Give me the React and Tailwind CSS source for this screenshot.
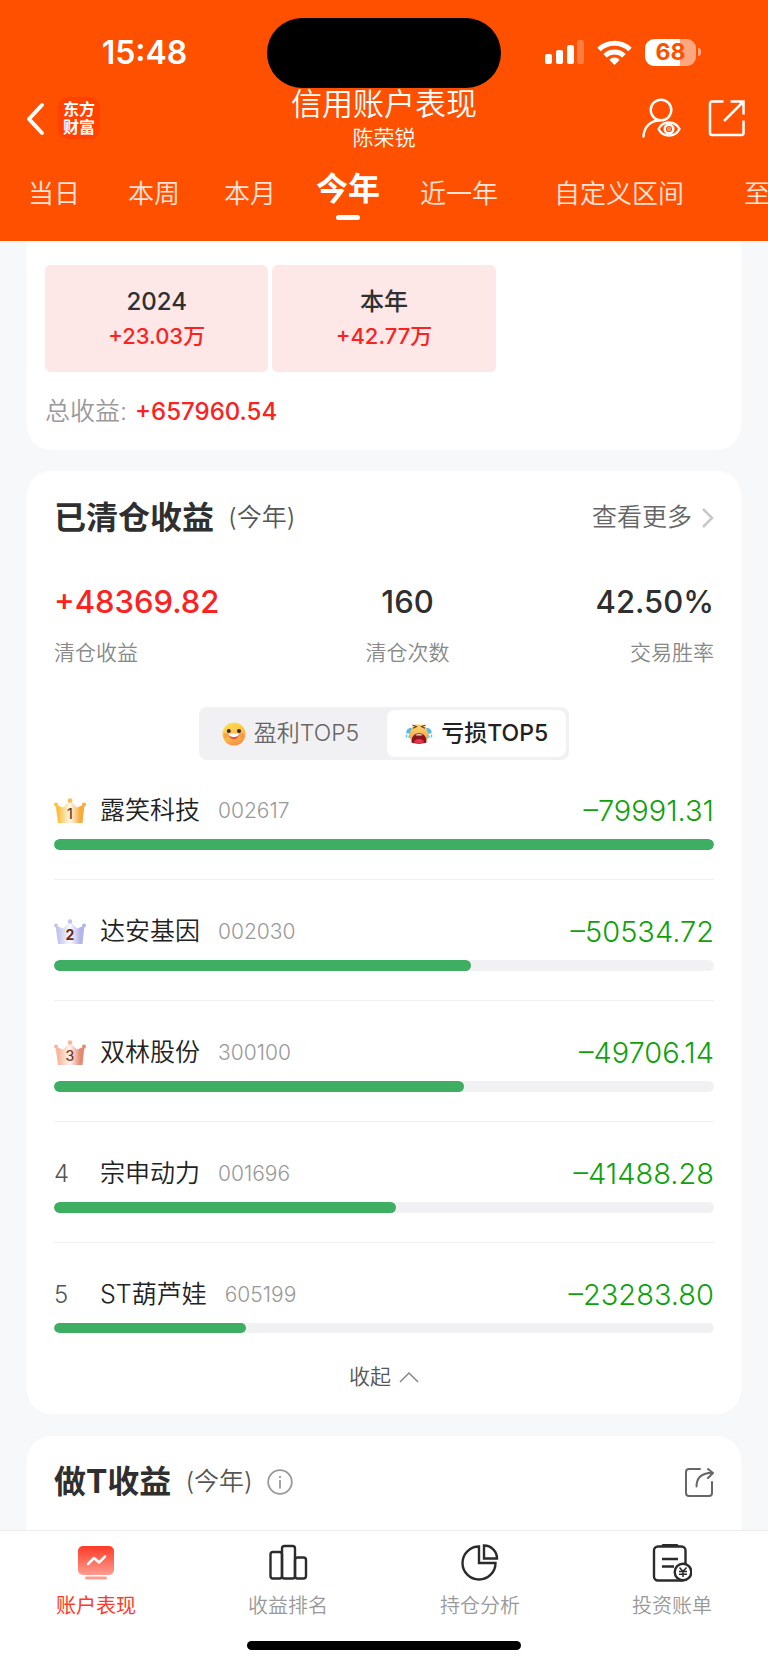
import { useState } from 'react'

const ranges = [
  { label: '当日', className: 'ml-7' },
  { label: '本周', className: 'ml-12' },
  { label: '本月', className: 'ml-11' },
  { label: '今年', className: 'ml-10' },
  { label: '近一年', className: 'ml-10' },
  { label: '自定义区间', className: 'ml-14' },
  { label: '至今', className: 'ml-15' },
]

const years = [
  { label: '2024', value: '+23.03万' },
  { label: '本年', value: '+42.77万' },
]

const stats = [
  { label: '清仓收益', value: '+48369.82', className: 'items-start text-[#fb2222]' },
  { label: '清仓次数', value: '160', className: 'items-center text-[#2f2f2f]' },
  { label: '交易胜率', value: '42.50%', className: 'items-end text-[#2f2f2f]' },
]

const losses = [
  { name: '露笑科技', code: '002617', amount: 79991.31 },
  { name: '达安基因', code: '002030', amount: 50534.72 },
  { name: '双林股份', code: '300100', amount: 49706.14 },
  { name: '宗申动力', code: '001696', amount: 41488.28 },
  { name: 'ST葫芦娃', code: '605199', amount: 23283.8 },
]

const crowns = [
  { edge: '#f6ab3a', mid: '#fff8ec', left: '#fbc043', text: '#6b3a1e' },
  { edge: '#b3b6e6', mid: '#fafaff', left: '#c3c5ea', text: '#6b2a1e' },
  { edge: '#e58a72', mid: '#fff4f0', left: '#f7b79c', text: '#7a3a2a' },
]

function StatusBar() {
  return (
    <div className="grid h-[88px] grid-cols-[1fr_234px_1fr] items-end">
      <div className="flex h-[70px] items-center justify-center pl-[22px]">
        <span className="text-[32px] font-semibold leading-none">15:48</span>
      </div>
      <div className="h-[70px] rounded-full bg-black" />
      <div className="flex h-[70px] items-center pb-0.5 pl-11">
        <svg className="h-6 w-[40px]" viewBox="0 0 40 24" fill="#fff">
          <rect x="0" y="14" width="7" height="10" rx="2" />
          <rect x="11" y="10" width="7" height="14" rx="2" />
          <rect x="22" y="5" width="7" height="19" rx="2" />
          <rect x="32" y="0" width="7" height="24" rx="2" opacity="0.25" />
        </svg>
        <svg className="ml-3 h-[25px] w-[35px]" viewBox="0 0 35 25" fill="none" stroke="#fff" strokeWidth="5">
          <path d="M2 9.5a22.5 22.5 0 0 1 31 0" />
          <path d="M8 15.8a13.8 13.8 0 0 1 19 0" />
          <path d="M17.5 25l-5.2-5.3a7.4 7.4 0 0 1 10.400 0z" fill="#fff" stroke="none" />
        </svg>
        <div className="ml-[13px] flex h-[27px] w-[51px] items-center justify-center rounded-[9px] bg-linear-to-r from-white from-68% to-white/50 to-68% text-[23px] font-bold leading-none text-[#ff5000]">
          68
        </div>
        <div className="ml-0.5 h-2 w-[3px] rounded-r-full bg-white/50" />
      </div>
    </div>
  )
}

function TitleBar() {
  return (
    <div className="grid h-16 grid-cols-[1fr_auto_1fr] items-center">
      <div className="flex items-center gap-3 pb-2 pl-6">
        <button aria-label="返回">
          <svg className="h-9 w-[22px]" viewBox="0 0 22 36" fill="none" stroke="#fff" strokeWidth="4" strokeLinecap="round" strokeLinejoin="round">
            <path d="M18 5L5 19L18 33" />
          </svg>
        </button>
        <div className="flex h-[42px] w-[42px] flex-col items-center justify-center rounded-[10px] bg-[#ff4200] text-[16px] font-bold leading-[18px]">
          <span>东方</span>
          <span>财富</span>
        </div>
      </div>
      <div className="flex flex-col items-center">
        <h1 className="text-[31px] font-[350] leading-8">信用账户表现</h1>
        <p className="text-[21px] font-[350] leading-9">陈荣锐</p>
      </div>
      <div className="flex items-center justify-end gap-[27px] pb-2 pr-[22px]">
        <button aria-label="账户查看">
          <svg className="h-10 w-[39px]" viewBox="0 0 39 40" fill="none" stroke="#fff" strokeWidth="2.4" strokeLinecap="round">
            <circle cx="19" cy="12" r="10.3" />
            <path d="M1.500 38.500C2 29 8.500 22.500 17.500 22.500" />
            <path d="M16.500 31C21 22.300 33 22.300 37.500 31C33 39.700 21 39.700 16.500 31z" />
            <circle cx="27" cy="31" r="4.300" />
            <circle cx="27" cy="31" r="1" opacity="0.4" />
          </svg>
        </button>
        <button aria-label="分享">
          <svg className="h-[38px] w-[38px]" viewBox="0 0 38 38" fill="none" stroke="#fff" strokeWidth="2.500">
            <path d="M15.500 2.500H4a2 2 0 0 0-2 2V34a2 2 0 0 0 2 2H33.500a2 2 0 0 0 2-2V21.500" />
            <path d="M22.500 2.500H35.500V15.500M35 3L16 22" />
          </svg>
        </button>
      </div>
    </div>
  )
}

function Ranges({ active, onChange }) {
  return (
    <nav className="flex h-[89px] items-center overflow-hidden whitespace-nowrap pb-1.5">
      {ranges.map((item) => (
        <button
          key={item.label}
          onClick={() => onChange(item.label)}
          className={`flex shrink-0 flex-col items-center ${item.className}`}
        >
          {active === item.label ? (
            <>
              <span className="text-[32px] font-bold leading-[44px]">{item.label}</span>
              <span className="mt-1 h-[5px] w-6 rounded-full bg-white" />
            </>
          ) : (
            <span className="text-[26px] font-[350] leading-9 text-white/85">{item.label}</span>
          )}
        </button>
      ))}
    </nav>
  )
}

function Crown({ rank }) {
  const c = crowns[rank - 1]
  const id = `crown-${rank}`
  return (
    <svg className="h-[26px] w-8" viewBox="0 0 32 26">
      <defs>
        <linearGradient id={id}>
          <stop offset="0.1" stopColor={c.left} />
          <stop offset="0.5" stopColor={c.mid} />
          <stop offset="0.85" stopColor={c.edge} />
        </linearGradient>
      </defs>
      <path d="M1.500 6.500L9 9.500L16 2.500L23 9.500L30.500 6.500L28.500 25H4z" fill={`url(#${id})`} />
      <circle cx="2" cy="6.500" r="2" fill={c.left} />
      <circle cx="16" cy="2.500" r="2.300" fill={c.left} />
      <circle cx="30" cy="6.500" r="2" fill={c.edge} />
      <text x="16" y="21" textAnchor="middle" fontSize="14" fontWeight={rank === 2 ? 700 : 500} fill={c.text}>{rank}</text>
    </svg>
  )
}

function SmileIcon() {
  return (
    <svg className="h-6 w-6" viewBox="0 0 24 24">
      <defs>
        <linearGradient id="smile" x1="0.3" y1="0" x2="0.7" y2="1">
          <stop offset="0" stopColor="#ffe04a" />
          <stop offset="0.55" stopColor="#fdbb4a" />
          <stop offset="1" stopColor="#f58a45" />
        </linearGradient>
      </defs>
      <circle cx="12" cy="12" r="11.500" fill="url(#smile)" />
      <circle cx="4" cy="13.500" r="2.500" fill="#f9813e" opacity="0.5" />
      <circle cx="19.500" cy="13.500" r="2.500" fill="#f9813e" opacity="0.5" />
      <circle cx="6.800" cy="9" r="2" fill="#3a2530" />
      <circle cx="17" cy="9" r="2" fill="#3a2530" />
      <path d="M6.500 11.800h10.500c0 7.200-10.500 7.200-10.500 0z" fill="#e8523c" />
      <path d="M6.500 11.500h10.500c0 4.700-10.500 4.700-10.500 0z" fill="#fff" />
    </svg>
  )
}

function CryIcon() {
  return (
    <svg className="h-6 w-7" viewBox="0 0 28 24">
      <defs>
        <linearGradient id="cry" x1="0" y1="0" x2="0" y2="1">
          <stop offset="0" stopColor="#ffd873" />
          <stop offset="1" stopColor="#ee9a3c" />
        </linearGradient>
      </defs>
      <circle cx="14" cy="12" r="10" fill="url(#cry)" />
      <path d="M7.500 3l4 1.500l-3.500 1.800M20.500 3l-4 1.500l3.500 1.800" fill="none" stroke="#6b3f1c" strokeWidth="1.200" />
      <path d="M7 6C3 5.500 1 8 1.500 11c1.500 1.500 3.500.5 4-1.500zM21 6c4-.5 6 2 5.500 5c-1.500 1.500-3.500.5-4-1.500z" fill="#55b9ee" />
      <path d="M1.500 13v2M4.500 13.500l-.5 2M26.500 13v2M23.500 13.500l.5 2" stroke="#6cc8f5" strokeWidth="1.600" strokeLinecap="round" />
      <path d="M6.500 20.500C6.500 14 9.500 11.300 14 11.300s7.500 2.700 7.500 9.200c-2 1.500-13 1.500-15 0z" fill="#8c1420" />
      <path d="M10.500 12.800c2-1 5-1 7 0l-.5.8h-6z" fill="#f3d9c4" />
      <path d="M9 20c1-4 9-4 10 0c-2 1.300-8 1.300-10 0z" fill="#e8354a" />
    </svg>
  )
}

function LossRow({ item, rank }) {
  return (
    <li className="flex h-[121px] flex-col border-b border-[#f1f1f3] last:h-[90px] last:border-0">
      <div className="mt-8 flex h-10 items-center">
        <span className="flex w-[46px] text-[24px] font-light text-[#555]">
          {rank <= 3 ? <Crown rank={rank} /> : rank}
        </span>
        <span className="text-[25px] font-[350] text-[#222]">{item.name}</span>
        <span className="ml-[18px] text-[21px] font-[350] text-[#999]">{item.code}</span>
        <span className="ml-auto text-[29px] font-[350] text-[#0ea10a]">–{item.amount.toFixed(2)}</span>
      </div>
      <div className="mt-2 h-[11px] overflow-hidden rounded-full bg-[#f1f1f3]">
        <div
          className="h-full rounded-full bg-[#3eae62]"
          style={{ width: `${(item.amount / losses[0].amount) * 100}%` }}
        />
      </div>
    </li>
  )
}

function ClosedCard() {
  const [tab, setTab] = useState('loss')
  const tabs = [
    { id: 'profit', label: '盈利TOP5', icon: <SmileIcon /> },
    { id: 'loss', label: '亏损TOP5', icon: <CryIcon /> },
  ]

  return (
    <section className="mt-[21px] rounded-3xl bg-white px-[27px] pb-[19px]">
      <div className="flex h-[94px] items-center">
        <h2 className="text-[32px] font-bold text-[#2f2f2f]">已清仓收益</h2>
        <span className="ml-3.5 text-[25px] font-[350] text-[#555]">(今年)</span>
        <a href="#more" className="ml-auto flex items-center gap-2.5 text-[25px] font-[350] text-[#666]">
          查看更多
          <svg className="h-5 w-3" viewBox="0 0 12 20" fill="none" stroke="#c8c8c8" strokeWidth="2.500">
            <path d="M1 1l9 9l-9 9" />
          </svg>
        </a>
      </div>

      <div className="flex justify-between">
        {stats.map((stat) => (
          <div key={stat.label} className={`flex flex-col ${stat.className}`}>
            <span className="h-[74px] text-[31px] font-medium leading-[74px]">{stat.value}</span>
            <span className="text-[21px] font-[350] leading-7 text-[#888]">{stat.label}</span>
          </div>
        ))}
      </div>

      <div className="mt-10 flex justify-center">
        <div className="flex h-[53px] rounded-lg bg-[#f1f1f4] p-[3px]">
          {tabs.map((item) => (
            <button
              key={item.id}
              onClick={() => setTab(item.id)}
              className={`flex items-center justify-center gap-2 rounded-lg text-[23px] ${tab === item.id ? 'bg-white px-[18px] font-medium text-[#222]' : 'pl-5 pr-7 font-[350] text-[#666]'}`}
            >
              {item.icon}
              {item.label}
            </button>
          ))}
        </div>
      </div>

      <ul className="-mt-px">
        {losses.map((item, i) => (
          <LossRow key={item.code} item={item} rank={i + 1} />
        ))}
      </ul>

      <button className="mx-auto mt-[26px] flex h-9 items-center gap-2 text-[21px] font-[350] text-[#555]">
        收起
        <svg className="h-3 w-5" viewBox="0 0 20 12" fill="none" stroke="#888" strokeWidth="1.500">
          <path d="M1 11l9-9l9 9" />
        </svg>
      </button>
    </section>
  )
}

function BottomNav() {
  const items = [
    {
      label: '账户表现',
      icon: (
        <>
          <defs>
            <linearGradient id="screen" x1="0" y1="0" x2="0" y2="1">
              <stop offset="0" stopColor="#ff3a26" />
              <stop offset="1" stopColor="#ff9c90" />
            </linearGradient>
          </defs>
          <rect x="2" y="3" width="36" height="29" rx="5" fill="url(#screen)" />
          <rect x="9" y="33.500" width="22" height="3" rx="1.500" fill="#ff9c90" />
          <path d="M12 21l6-6l5 4.500l6-6" fill="none" stroke="#fff" strokeWidth="2.500" strokeLinecap="round" strokeLinejoin="round" />
        </>
      ),
    },
    {
      label: '收益排名',
      icon: (
        <g fill="none" stroke="#2b2b2b" strokeWidth="2.400">
          <rect x="2.500" y="9" width="11.500" height="26.500" rx="2.500" />
          <rect x="14" y="3" width="13" height="32.500" rx="2.500" />
          <rect x="27" y="14.500" width="11" height="21" rx="2.500" />
        </g>
      ),
    },
    {
      label: '持仓分析',
      icon: (
        <g fill="none" stroke="#2b2b2b" strokeWidth="2.400">
          <path d="M19 3.500A16.500 16.500 0 1 0 35.500 20H19z" />
          <path d="M24 2.500a13 13 0 0 1 13 13H24z" />
        </g>
      ),
    },
    {
      label: '投资账单',
      icon: (
        <g fill="none" stroke="#2b2b2b" strokeWidth="2.400">
          <rect x="2" y="3.500" width="31.500" height="34" rx="4" />
          <path d="M11 2.500h14" strokeWidth="3" strokeLinecap="round" />
          <path d="M10 16h16M10 23.500h12" />
          <circle cx="31" cy="29" r="8.300" fill="#fff" />
          <path d="M27.500 24.500L31 28.500l3.500-4M31 28.500v5.500M27 28.500h8M27 31.200h8" strokeWidth="1.500" />
        </g>
      ),
    },
  ]

  return (
    <footer className="border-t border-[#ececf0] bg-white">
      <nav className="grid grid-cols-4">
        {items.map((item, i) => (
          <a
            key={item.label}
            href={`#tab-${i}`}
            className={`flex flex-col items-center pt-3 text-[20px] leading-[26px] ${i === 0 ? 'font-normal text-[#ff3a26]' : 'font-[350] text-[#999]'}`}
          >
            <svg className="mb-2.5 h-10 w-10" viewBox="0 0 40 40">{item.icon}</svg>
            {item.label}
          </a>
        ))}
      </nav>
      <div className="flex h-[46px] items-end justify-center pb-[15px]">
        <div className="h-[9px] w-[274px] rounded-full bg-black" />
      </div>
    </footer>
  )
}

export default function App() {
  const [range, setRange] = useState('今年')

  return (
    <div className="flex min-h-screen flex-col bg-[#f6f8fa] font-[Inter,'Noto_Sans_CJK_SC',sans-serif]">
      <header className="bg-[#ff5000] text-white">
        <StatusBar />
        <TitleBar />
        <Ranges active={range} onChange={setRange} />
      </header>

      <main className="flex flex-1 flex-col px-[27px]">
        <section className="rounded-b-3xl bg-white px-[18px] pb-5 pt-6">
          <div className="grid grid-cols-3 gap-1">
            {years.map((year) => (
              <div key={year.label} className="flex h-[107px] flex-col items-center justify-center rounded-md bg-[#fde7e7] pb-0.5 font-medium">
                <span className="text-[24px] leading-9 text-[#2f2f2f]">{year.label}</span>
                <span className="text-[22px] leading-8 text-[#fb2222]">{year.value}</span>
              </div>
            ))}
          </div>
          <p className="mt-[22px] flex h-9 items-center gap-2 text-[25px]">
            <span className="font-[350] text-[#999]">总收益:</span>
            <span className="text-[24px] font-medium text-[#fb2222]">+657960.54</span>
          </p>
        </section>

        <ClosedCard />

        <section className="mt-[22px] flex-1 rounded-t-3xl bg-white px-[27px]">
          <div className="flex h-[92px] items-center">
            <h2 className="text-[32px] font-bold text-[#2f2f2f]">做T收益</h2>
            <span className="ml-3.5 text-[25px] font-[350] text-[#555]">(今年)</span>
            <button aria-label="说明" className="ml-3.5">
              <svg className="h-[26px] w-[26px]" viewBox="0 0 26 26" fill="none" stroke="#999" strokeWidth="1.800">
                <circle cx="13" cy="13" r="11.800" />
                <path d="M13 11v8.500M13 7v2" />
              </svg>
            </button>
            <button aria-label="分享" className="ml-auto">
              <svg className="h-[30px] w-[30px]" viewBox="0 0 30 30" fill="none" stroke="#666" strokeWidth="2" strokeLinecap="round" strokeLinejoin="round">
                <path d="M16 2H5a3 3 0 0 0-3 3V26a3 3 0 0 0 3 3H25a3 3 0 0 0 3-3V15" />
                <path d="M12.500 19.500C12.500 10 18 6 28.500 5.800M24 2l5 4l-5 5" />
              </svg>
            </button>
          </div>
        </section>
      </main>

      <BottomNav />
    </div>
  )
}
